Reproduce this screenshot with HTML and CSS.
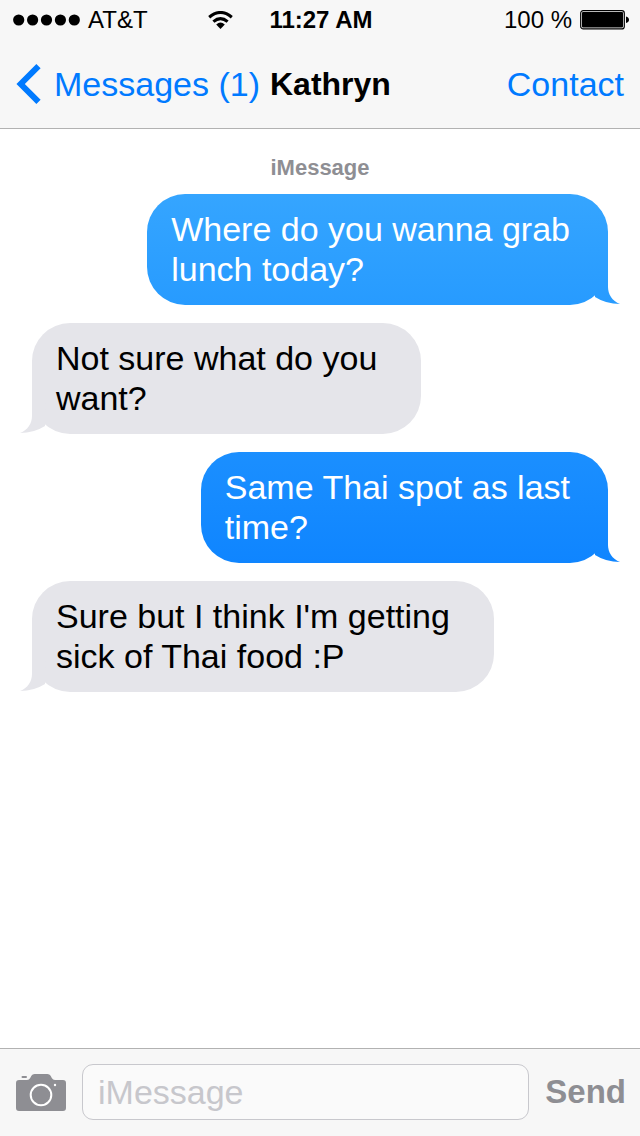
FILE: index.html
```html
<!DOCTYPE html>
<html lang="en">
<head>
<meta charset="utf-8">
<meta name="viewport" content="width=device-width, initial-scale=1">
<title>Kathryn</title>
<link rel="stylesheet" href="styles.css">
</head>
<body>
<header class="header">
  <div class="status">
    <div class="status-left">
      <svg class="signal" width="67" height="12" viewBox="0 0 67 12" aria-hidden="true">
        <circle cx="5.7" cy="6" r="5.6"/><circle cx="19.6" cy="6" r="5.6"/><circle cx="33.5" cy="6" r="5.6"/><circle cx="47.4" cy="6" r="5.6"/><circle cx="61.3" cy="6" r="5.6"/>
      </svg>
      <span class="carrier">AT&amp;T</span>
      <svg class="wifi" width="25" height="18" viewBox="0 0 25 18" aria-hidden="true">
        <path d="M1.2 6.2Q12.5 -3.2 23.8 6.2" fill="none" stroke="#000" stroke-width="3.1"/>
        <path d="M5.4 10.6Q12.5 4.6 19.6 10.6" fill="none" stroke="#000" stroke-width="3.1"/>
        <path d="M8.2 13.4Q12.5 9.8 16.8 13.4L12.5 18Z"/>
      </svg>
    </div>
    <span class="clock">11:27 AM</span>
    <div class="status-right">
      <span>100 %</span>
      <svg width="49" height="20" viewBox="0 0 49 20" aria-hidden="true">
        <rect x=".7" y=".7" width="43.6" height="18.2" rx="2.5" fill="none" stroke="#000" stroke-width="1.2"/>
        <rect x="2" y="2" width="41" height="15.6" rx="1"/>
        <path d="M46 6.5Q49 7.3 49 9.8Q49 12.3 46 13.1Z"/>
      </svg>
    </div>
  </div>
  <nav class="nav">
    <a class="back" href="#messages">
      <svg width="25" height="40" viewBox="0 0 25 40" aria-hidden="true"><path d="M22.5 2.2L4.7 20L22.5 37.8" fill="none" stroke="#007aff" stroke-width="6"/></svg>
      Messages (1)
    </a>
    <h1 class="title">Kathryn</h1>
    <a class="contact" href="#contact">Contact</a>
  </nav>
</header>

<main class="thread">
  <h2 class="service">iMessage</h2>
  <div class="bubble sent earlier">Where do you wanna grab<br>lunch today?
    <svg class="tail" width="26" height="40" viewBox="0 0 26 40" aria-hidden="true">
      <linearGradient id="tail-earlier" gradientUnits="userSpaceOnUse" x1="0" y1="-71" x2="0" y2="40"><stop offset="0" stop-color="#35a5ff"/><stop offset="1" stop-color="#279bff"/></linearGradient>
      <path fill="url(#tail-earlier)" d="M14 0V22C14 29 18 36 26 39Q12 39 1 32L0 0Z"/>
    </svg>
  </div>
  <div class="bubble received">Not sure what do you<br>want?
    <svg class="tail" width="26" height="40" viewBox="0 0 26 40" aria-hidden="true"><path fill="#e5e5ea" d="M14 0V22C14 29 18 36 26 39Q12 39 1 32L0 0Z"/></svg>
  </div>
  <div class="bubble sent">Same Thai spot as last<br>time?
    <svg class="tail" width="26" height="40" viewBox="0 0 26 40" aria-hidden="true">
      <linearGradient id="tail-latest" gradientUnits="userSpaceOnUse" x1="0" y1="-71" x2="0" y2="40"><stop offset="0" stop-color="#1b8fff"/><stop offset="1" stop-color="#0f85ff"/></linearGradient>
      <path fill="url(#tail-latest)" d="M14 0V22C14 29 18 36 26 39Q12 39 1 32L0 0Z"/>
    </svg>
  </div>
  <div class="bubble received">Sure but I think I'm getting<br>sick of Thai food :P
    <svg class="tail" width="26" height="40" viewBox="0 0 26 40" aria-hidden="true"><path fill="#e5e5ea" d="M14 0V22C14 29 18 36 26 39Q12 39 1 32L0 0Z"/></svg>
  </div>
</main>

<form class="composer">
  <button class="camera" type="button" aria-label="Camera">
    <svg width="50" height="38" viewBox="0 0 50 38" aria-hidden="true">
      <path fill="#8e8e93" d="M3 7H11Q13.2 7 14.2 5L15.4 2.8Q16.4 1 18.6 1H31.4Q33.6 1 34.6 2.8L35.8 5Q36.8 7 39 7H47Q50 7 50 10V35Q50 38 47 38H3Q0 38 0 35V10Q0 7 3 7Z"/>
      <rect x="5.5" y="3" width="5.5" height="2" rx="1" fill="#8e8e93"/>
      <circle cx="25" cy="22" r="10.3" fill="none" stroke="#fff" stroke-width="2"/>
      <circle cx="39" cy="12" r="1.2" fill="#fff"/>
    </svg>
  </button>
  <input class="field" type="text" placeholder="iMessage" aria-label="iMessage">
  <button class="send" type="submit">Send</button>
</form>
</body>
</html>
```
FILE: styles.css
```css
* {
  box-sizing: border-box;
}

body {
  margin: 0;
  min-height: 100vh;
  display: flex;
  flex-direction: column;
  background: #fff;
  color: #000;
  font-family: "Liberation Sans", Arial, sans-serif;
  font-size: 34px;
  line-height: 40px;
}

svg {
  display: block;
  flex: none;
}

.header {
  background: #f7f7f7;
  border-bottom: 1px solid #b2b2b2;
}

.status {
  display: grid;
  grid-template-columns: 1fr auto 1fr;
  align-items: center;
  height: 40px;
  padding: 0 11px 0 13px;
  font-size: 24px;
}

.status-left,
.status-right {
  display: flex;
  align-items: center;
}

.status-left {
  gap: 8px;
}

.status-right {
  justify-content: flex-end;
  gap: 8px;
}

.wifi {
  margin-left: auto;
  margin-right: 36px;
}

.clock {
  font-weight: bold;
}

.nav {
  display: flex;
  align-items: center;
  height: 88px;
  padding: 0 16px;
}

.nav a {
  color: #007aff;
  text-decoration: none;
}

.back {
  display: flex;
  align-items: center;
  gap: 13px;
}

.title {
  margin: 0 auto 0 10px;
  font-size: 32px;
}

.thread {
  flex: 1;
  display: flex;
  flex-direction: column;
  gap: 18px;
  padding: 24px 32px;
}

.service {
  align-self: center;
  margin: 0 0 -7px;
  font-size: 22px;
  line-height: 30px;
  color: #8e8e93;
}

.bubble {
  position: relative;
  padding: 15px 38px 16px 24px;
  border-radius: 38px;
}

.sent {
  align-self: flex-end;
  color: #fff;
  background: linear-gradient(#1b8fff, #0f85ff);
}

.earlier {
  background: linear-gradient(#35a5ff, #279bff);
}

.received {
  align-self: flex-start;
  padding-right: 44px;
  background: #e5e5ea;
}

.tail {
  position: absolute;
  bottom: 0;
  right: -12px;
}

.received .tail {
  right: auto;
  left: -12px;
  transform: scaleX(-1);
}

.composer {
  display: flex;
  align-items: center;
  height: 88px;
  padding: 0 14px 1px 16px;
  gap: 16px;
  background: #f7f7f7;
  border-top: 1px solid #b2b2b2;
}

.camera,
.send {
  padding: 0;
  border: 0;
  background: none;
  font: inherit;
  color: #8e8e93;
}

.send {
  font-size: 33px;
  font-weight: bold;
}

.field {
  flex: 1;
  min-width: 0;
  height: 56px;
  padding: 0 15px;
  border: 1px solid #c8c8cd;
  border-radius: 11px;
  background: #fafafa;
  font: inherit;
  color: #000;
}

.field::placeholder {
  color: #c7c7cc;
  opacity: 1;
}
```
